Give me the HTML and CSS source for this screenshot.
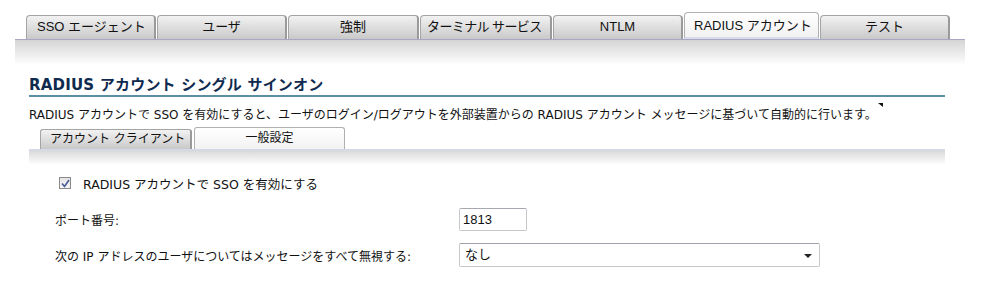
FILE: index.html
```html
<!DOCTYPE html>
<html lang="ja">
<head>
<meta charset="utf-8">
<link rel="stylesheet" href="styles.css">
</head>
<body>
<div class="page">
  <div class="tabbar">
    <div class="tab w130">SSO エージェント</div>
    <div class="tab w130 center">ユーザ</div>
    <div class="tab w131 center">強制</div>
    <div class="tab w132 tight">ターミナル サービス</div>
    <div class="tab w130 center">NTLM</div>
    <div class="tab active">RADIUS アカウント</div>
    <div class="tab w130 center">テスト</div>
  </div>
  <div class="panel"></div>

  <div class="section">
    <h1 class="heading">RADIUS アカウント シングル サインオン</h1>
    <p class="desc">RADIUS アカウントで SSO を有効にすると、ユーザのログイン/ログアウトを外部装置からの RADIUS アカウント メッセージに基づいて自動的に行います。<span class="corner"></span></p>
    <div class="subtabs">
      <div class="subtab">アカウント クライアント</div>
      <div class="subtab active">一般設定</div>
    </div>
    <div class="subpanel"></div>

    <div class="form">
      <label class="check-row"><span class="checkbox"><svg width="9" height="9" viewBox="0 0 9 9"><path d="M1 4.5 L3.5 7.5 L8 1" fill="none" stroke="#4a5a9a" stroke-width="1.6"/></svg></span>RADIUS アカウントで SSO を有効にする</label>
      <div class="row">
        <span class="label">ポート番号:</span>
        <span class="input">1813</span>
      </div>
      <div class="row">
        <span class="label">次の IP アドレスのユーザについてはメッセージをすべて無視する:</span>
        <span class="select">なし<span class="arrow"></span></span>
      </div>
    </div>
  </div>
</div>
</body>
</html>
```

FILE: styles.css
```css
* { box-sizing: border-box; }
html, body { margin: 0; padding: 0; background: #fff; }
body {
  font-family: "DejaVu Sans", "Noto Sans CJK JP", sans-serif;
  color: #111;
  width: 983px;
  height: 301px;
  overflow: hidden;
}
.page { padding-top: 12px; }

.tabbar {
  display: flex;
  align-items: flex-end;
  gap: 1px;
  margin-left: 26px;
  height: 27px;
}
.tab {
  height: 24px;
  border: 1px solid #a4a4a4;
  border-bottom: none;
  border-right: 2px solid #9a9a9a;
  border-radius: 4px 4px 0 0;
  background: linear-gradient(#f2f2f2, #c9c9c9);
  font-family: "Liberation Sans", "Noto Sans CJK JP", sans-serif;
  font-size: 13px;
  line-height: 22px;
  padding-left: 10px;
  white-space: nowrap;
  overflow: hidden;
}
.w130 { width: 130px; }
.w131 { width: 131px; }
.w132 { width: 132px; }
.tab.center { text-align: center; padding-left: 0; }
.tab.tight { padding-left: 6px; letter-spacing: -0.6px; }
.tab.active {
  width: 135px;
  height: 27px;
  background: linear-gradient(#ffffff, #f1f1f1);
  border-color: #b0b0b0;
  border-right: 1px solid #b0b0b0;
  border-bottom: 2px solid #d8dcec;
  line-height: 26px;
  padding-left: 9px;
}

.panel {
  margin-left: 15px;
  width: 950px;
  height: 26px;
  border-top: 1px solid #a8a8c2;
  background: linear-gradient(#d5d5d5, #ffffff);
}

.section {
  margin-left: 29px;
  width: 916px;
}
.heading {
  margin: 11px 0 0 0;
  font-family: "DejaVu Sans", "Noto Sans CJK JP", sans-serif;
  font-size: 15px;
  font-weight: bold;
  color: #0e2a4e;
  line-height: 19px;
  padding-bottom: 0;
  border-bottom: 2px solid #5b8ea3;
  letter-spacing: 0.2px;
}
.desc {
  position: relative;
  margin: 10px 0 0 0;
  font-family: "DejaVu Sans", "Noto Sans CJK JP", sans-serif;
  font-size: 12px;
  line-height: 16px;
  color: #111;
  white-space: nowrap;
}
.corner {
  position: absolute;
  left: 849px;
  top: -4px;
  width: 0;
  height: 0;
  border-top: 4px solid #111;
  border-left: 5px solid transparent;
}
.subtabs {
  display: flex;
  align-items: flex-end;
  gap: 2px;
  margin-top: 4px;
  margin-left: 11px;
  height: 22px;
}
.subtab {
  width: 152px;
  height: 20px;
  border: 1px solid #a4a4a4;
  border-bottom: none;
  border-right: 2px solid #9a9a9a;
  border-radius: 3px 3px 0 0;
  background: linear-gradient(#f2f2f2, #c9c9c9);
  font-family: "DejaVu Sans", "Noto Sans CJK JP", sans-serif;
  font-size: 12px;
  line-height: 19px;
  padding-left: 9px;
  white-space: nowrap;
}
.subtab.active {
  width: 151px;
  height: 22px;
  background: linear-gradient(#ffffff, #f2f2f2);
  border-right: 1px solid #b0b0b0;
  border-color: #b0b0b0;
  text-align: center;
  padding-left: 0;
  line-height: 21px;
}
.subpanel {
  height: 16px;
  border-top: 2px solid #d6d8e6;
  background: linear-gradient(#dadada, #ffffff);
}

.form {
  padding-top: 9px;
  font-family: "DejaVu Sans", "Noto Sans CJK JP", sans-serif;
  font-size: 12px;
  color: #111;
}
.check-row {
  display: flex;
  align-items: center;
  margin-left: 30px;
  height: 18px;
  font-size: 12.5px;
}
.checkbox {
  width: 12px;
  height: 12px;
  border: 1px solid #8a8a8a;
  background: linear-gradient(#e4e4e4, #f6f6f6);
  margin-right: 12px;
  display: flex;
  align-items: center;
  justify-content: center;
}
.row {
  display: flex;
  align-items: center;
  margin-left: 26px;
}
.row:nth-child(2) { margin-top: 16px; }
.row:nth-child(3) { margin-top: 12px; }
.label {
  width: 404px;
  white-space: nowrap;
}
.input {
  width: 68px;
  height: 23px;
  border: 1px solid #c8c8cc;
  border-top-color: #a8a8b0;
  border-radius: 2px;
  padding-left: 3px;
  font-family: "Liberation Sans", sans-serif;
  font-size: 13px;
  line-height: 21px;
}
.select {
  position: relative;
  width: 361px;
  height: 24px;
  border: 1px solid #c8c8cc;
  border-top-color: #a0a0a8;
  border-radius: 2px;
  padding-left: 5px;
  font-size: 13px;
  line-height: 22px;
}
.arrow {
  position: absolute;
  right: 7px;
  top: 10px;
  width: 0;
  height: 0;
  border-top: 4px solid #222;
  border-left: 4px solid transparent;
  border-right: 4px solid transparent;
}
```
